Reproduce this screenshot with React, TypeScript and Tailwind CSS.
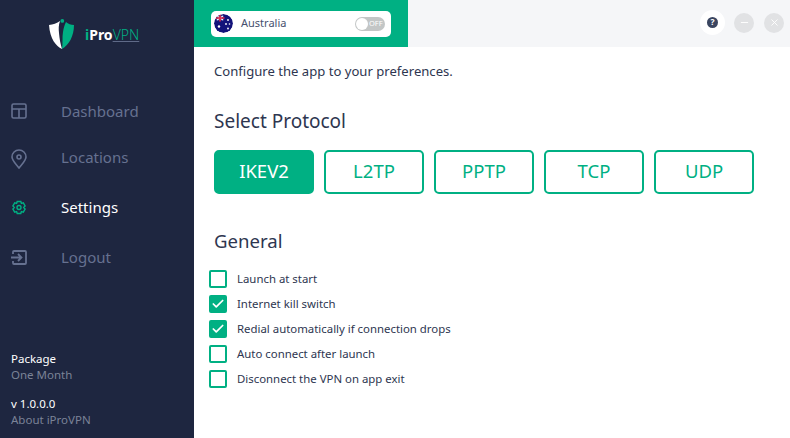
import React from 'react';
import { Check, Minus, X } from 'lucide-react';

const FONT = "font-['Noto_Sans','Open_Sans',sans-serif]";

const PROTOCOLS = ['IKEV2', 'L2TP', 'PPTP', 'TCP', 'UDP'];

const OPTIONS = [
  { label: 'Launch at start', checked: false },
  { label: 'Internet kill switch', checked: true },
  { label: 'Redial automatically if connection drops', checked: true },
  { label: 'Auto connect after launch', checked: false },
  { label: 'Disconnect the VPN on app exit', checked: false },
];

const Logo = () => (
  <svg width="26" height="31" viewBox="0 0 26 31">
    <path d="M0 6 C4 5.5 8 4.5 11 2 C9.5 6 9.5 10 10 14 C10.5 20 11.5 25 13 30 C7 27 1 20 0 6 Z" fill="#ffffff" />
    <path d="M17 3 C19 5 22 6 25 6 C25 17 20 26 13 30 C14 24 13 18 14 13 C14.5 9 15.5 6 17 3 Z" fill="#00b083" />
    <circle cx="13.3" cy="1.9" r="1.9" fill="#00b083" />
  </svg>
);

const DashboardIcon = () => (
  <svg width="16" height="16" viewBox="0 0 16 16" fill="none" stroke="#667190" strokeWidth="1.6">
    <rect x="1" y="1" width="14" height="14" rx="1.5" />
    <path d="M1 6h14M8 6v9" />
  </svg>
);

const PinIcon = () => (
  <svg width="16" height="20" viewBox="0 0 16 20" fill="none" stroke="#667190" strokeWidth="1.6" className="translate-y-[2px]">
    <path d="M8 19 C5 15 1 11.5 1 8 A7 7 0 0 1 15 8 C15 11.5 11 15 8 19 Z" />
    <circle cx="8" cy="8" r="2" />
  </svg>
);

const GearIcon = () => (
  <svg width="17" height="17" viewBox="0 0 16 16" fill="none" stroke="#00b083" strokeWidth="1.4">
    <path d="M6.2 1h3.6l.6 1.9 1.9-.5 1.8 3-1.4 1.6 1.4 1.6-1.8 3-1.9-.5-.6 1.9H6.2l-.6-1.9-1.9.5-1.8-3L3.3 7 1.9 5.4l1.8-3 1.9.5z" transform="translate(0 1)" />
    <circle cx="8" cy="8" r="2" />
  </svg>
);

const LogoutIcon = () => (
  <svg width="16" height="15" viewBox="0 0 16 15" fill="none" stroke="#667190" strokeWidth="1.8">
    <path d="M2 4V2a1 1 0 0 1 1-1h11a1 1 0 0 1 1 1v11a1 1 0 0 1-1 1H3a1 1 0 0 1-1-1v-2" />
    <path d="M0 7.5h10M7 4l3.5 3.5L7 11" />
  </svg>
);

const Flag = () => (
  <svg width="19" height="19" viewBox="0 0 19 19" className="rounded-full">
    <circle cx="9.5" cy="9.5" r="9.5" fill="#12127a" />
    <path d="M2 1h8v6H2z" fill="#2a2a8a" />
    <path d="M3 2l6 4M9 2L3 6" stroke="#ffffff" strokeWidth="1.2" />
    <path d="M6 0.5v7M1.5 4h9" stroke="#e0284a" strokeWidth="1.6" />
    <circle cx="5" cy="12.5" r="1.2" fill="#ffffff" />
    <circle cx="14" cy="6" r="0.9" fill="#ffffff" />
    <circle cx="12" cy="10" r="0.9" fill="#ffffff" />
    <circle cx="15.5" cy="10" r="0.8" fill="#ffffff" />
    <circle cx="14" cy="14.5" r="0.9" fill="#ffffff" />
  </svg>
);

const NavItem = ({ icon, label, active, className }: { icon: React.ReactNode; label: string; active?: boolean; className?: string }) => (
  <div className={`flex items-center ${className ?? ''}`}>
    <div className="w-[16px] flex justify-center ml-[11px]">{icon}</div>
    <span className={`ml-[34px] text-[15px] leading-[20px] ${active ? 'text-white' : 'text-[#667190]'}`}>{label}</span>
  </div>
);

const App: React.FC = () => {
  return (
    <div className={`flex w-[790px] h-[438px] overflow-hidden bg-white ${FONT}`}>
      {/* Sidebar */}
      <aside className="w-[194px] shrink-0 bg-[#1e2640] flex flex-col">
        <div className="flex items-center pl-[49px] pt-[19px]">
          <Logo />
          <div className="ml-[10px] text-[14px] leading-[18px] flex">
            <span className="text-[#00b083] font-bold">i</span>
            <span className="text-white font-bold">Pro</span>
            <span className="text-[#00b083] font-light underline decoration-[#5f6a88]">VPN</span>
          </div>
        </div>
        <nav className="mt-[51px] flex flex-col">
          <NavItem icon={<DashboardIcon />} label="Dashboard" />
          <NavItem icon={<PinIcon />} label="Locations" className="mt-[26px]" />
          <NavItem icon={<GearIcon />} label="Settings" active className="mt-[30px]" />
          <NavItem icon={<LogoutIcon />} label="Logout" className="mt-[30px]" />
        </nav>
        <div className="mt-auto pl-[11px] pb-[10px] text-[11.5px] leading-[16px]">
          <div className="text-white">Package</div>
          <div className="text-[#7b8397]">One Month</div>
          <div className="text-white mt-[13px]">v 1.0.0.0</div>
          <div className="text-[#7b8397]">About iProVPN</div>
        </div>
      </aside>

      <main className="flex-1 flex flex-col min-w-0">
        {/* Top bar */}
        <header className="h-[47px] bg-[#f5f6f8] flex items-center shrink-0">
          <div className="w-[214px] h-full bg-[#00b083] flex items-center pl-[17px]">
            <div className="w-[180px] h-[26px] bg-white rounded-[5px] flex items-center pl-[3px] pr-[6px]">
              <Flag />
              <span className="ml-[8px] -mt-[1px] text-[11px] text-[#46506e]">Australia</span>
              <div className="ml-auto w-[30px] h-[14px] rounded-full bg-[#c3c6c6] flex items-center">
                <div className="w-[12px] h-[12px] ml-[1px] rounded-full bg-white" />
                <span className="ml-[1px] text-[7.5px] leading-none text-white">OFF</span>
              </div>
            </div>
          </div>
          <div className="ml-auto flex items-center pr-[6px] pb-[2px]">
            <div className="w-[25px] h-[25px] rounded-full bg-white flex items-center justify-center">
              <div className="w-[11px] h-[11px] rounded-full bg-[#3a4560] flex items-center justify-center text-[8.5px] font-bold leading-none text-white">?</div>
            </div>
            <div className="ml-[9px] w-[20px] h-[20px] rounded-full bg-[#e1e2e4] flex items-center justify-center">
              <Minus size={11} color="#ffffff" strokeWidth={2} />
            </div>
            <div className="ml-[10px] w-[20px] h-[20px] rounded-full bg-[#e1e2e4] flex items-center justify-center">
              <X size={11} color="#ffffff" strokeWidth={2} />
            </div>
          </div>
        </header>

        {/* Content */}
        <div className="pl-[20px] flex-1">
          <p className="mt-[15px] text-[13.1px] leading-[18px] text-[#2e3650]">Configure the app to your preferences.</p>
          <h2 className="mt-[28px] text-[19px] leading-[26px] text-[#2e3650]">Select Protocol</h2>
          <div className="mt-[16px] flex gap-[10px]">
            {PROTOCOLS.map((p, i) => (
              <button
                key={p}
                className={`w-[100px] h-[44px] pb-[2px] rounded-[5px] border-2 border-[#00b083] text-[18.5px] ${i === 0 ? 'bg-[#00b083] text-white' : 'bg-white text-[#00b083]'}`}
              >
                {p}
              </button>
            ))}
          </div>
          <h2 className="mt-[34px] text-[18.6px] leading-[26px] text-[#2e3650]">General</h2>
          <div className="mt-[16px] -ml-[5px] flex flex-col gap-[7px]">
            {OPTIONS.map((o) => (
              <label key={o.label} className="flex items-center h-[18px]">
                <span className={`w-[18px] h-[18px] rounded-[2px] border-2 border-[#00b083] flex items-center justify-center ${o.checked ? 'bg-[#00b083]' : 'bg-white'}`}>
                  {o.checked && <Check size={14} color="#ffffff" strokeWidth={3} />}
                </span>
                <span className="ml-[10px] -mt-[1px] text-[11.4px] text-[#2e3650]">{o.label}</span>
              </label>
            ))}
          </div>
        </div>
      </main>
    </div>
  );
};

export default App;
